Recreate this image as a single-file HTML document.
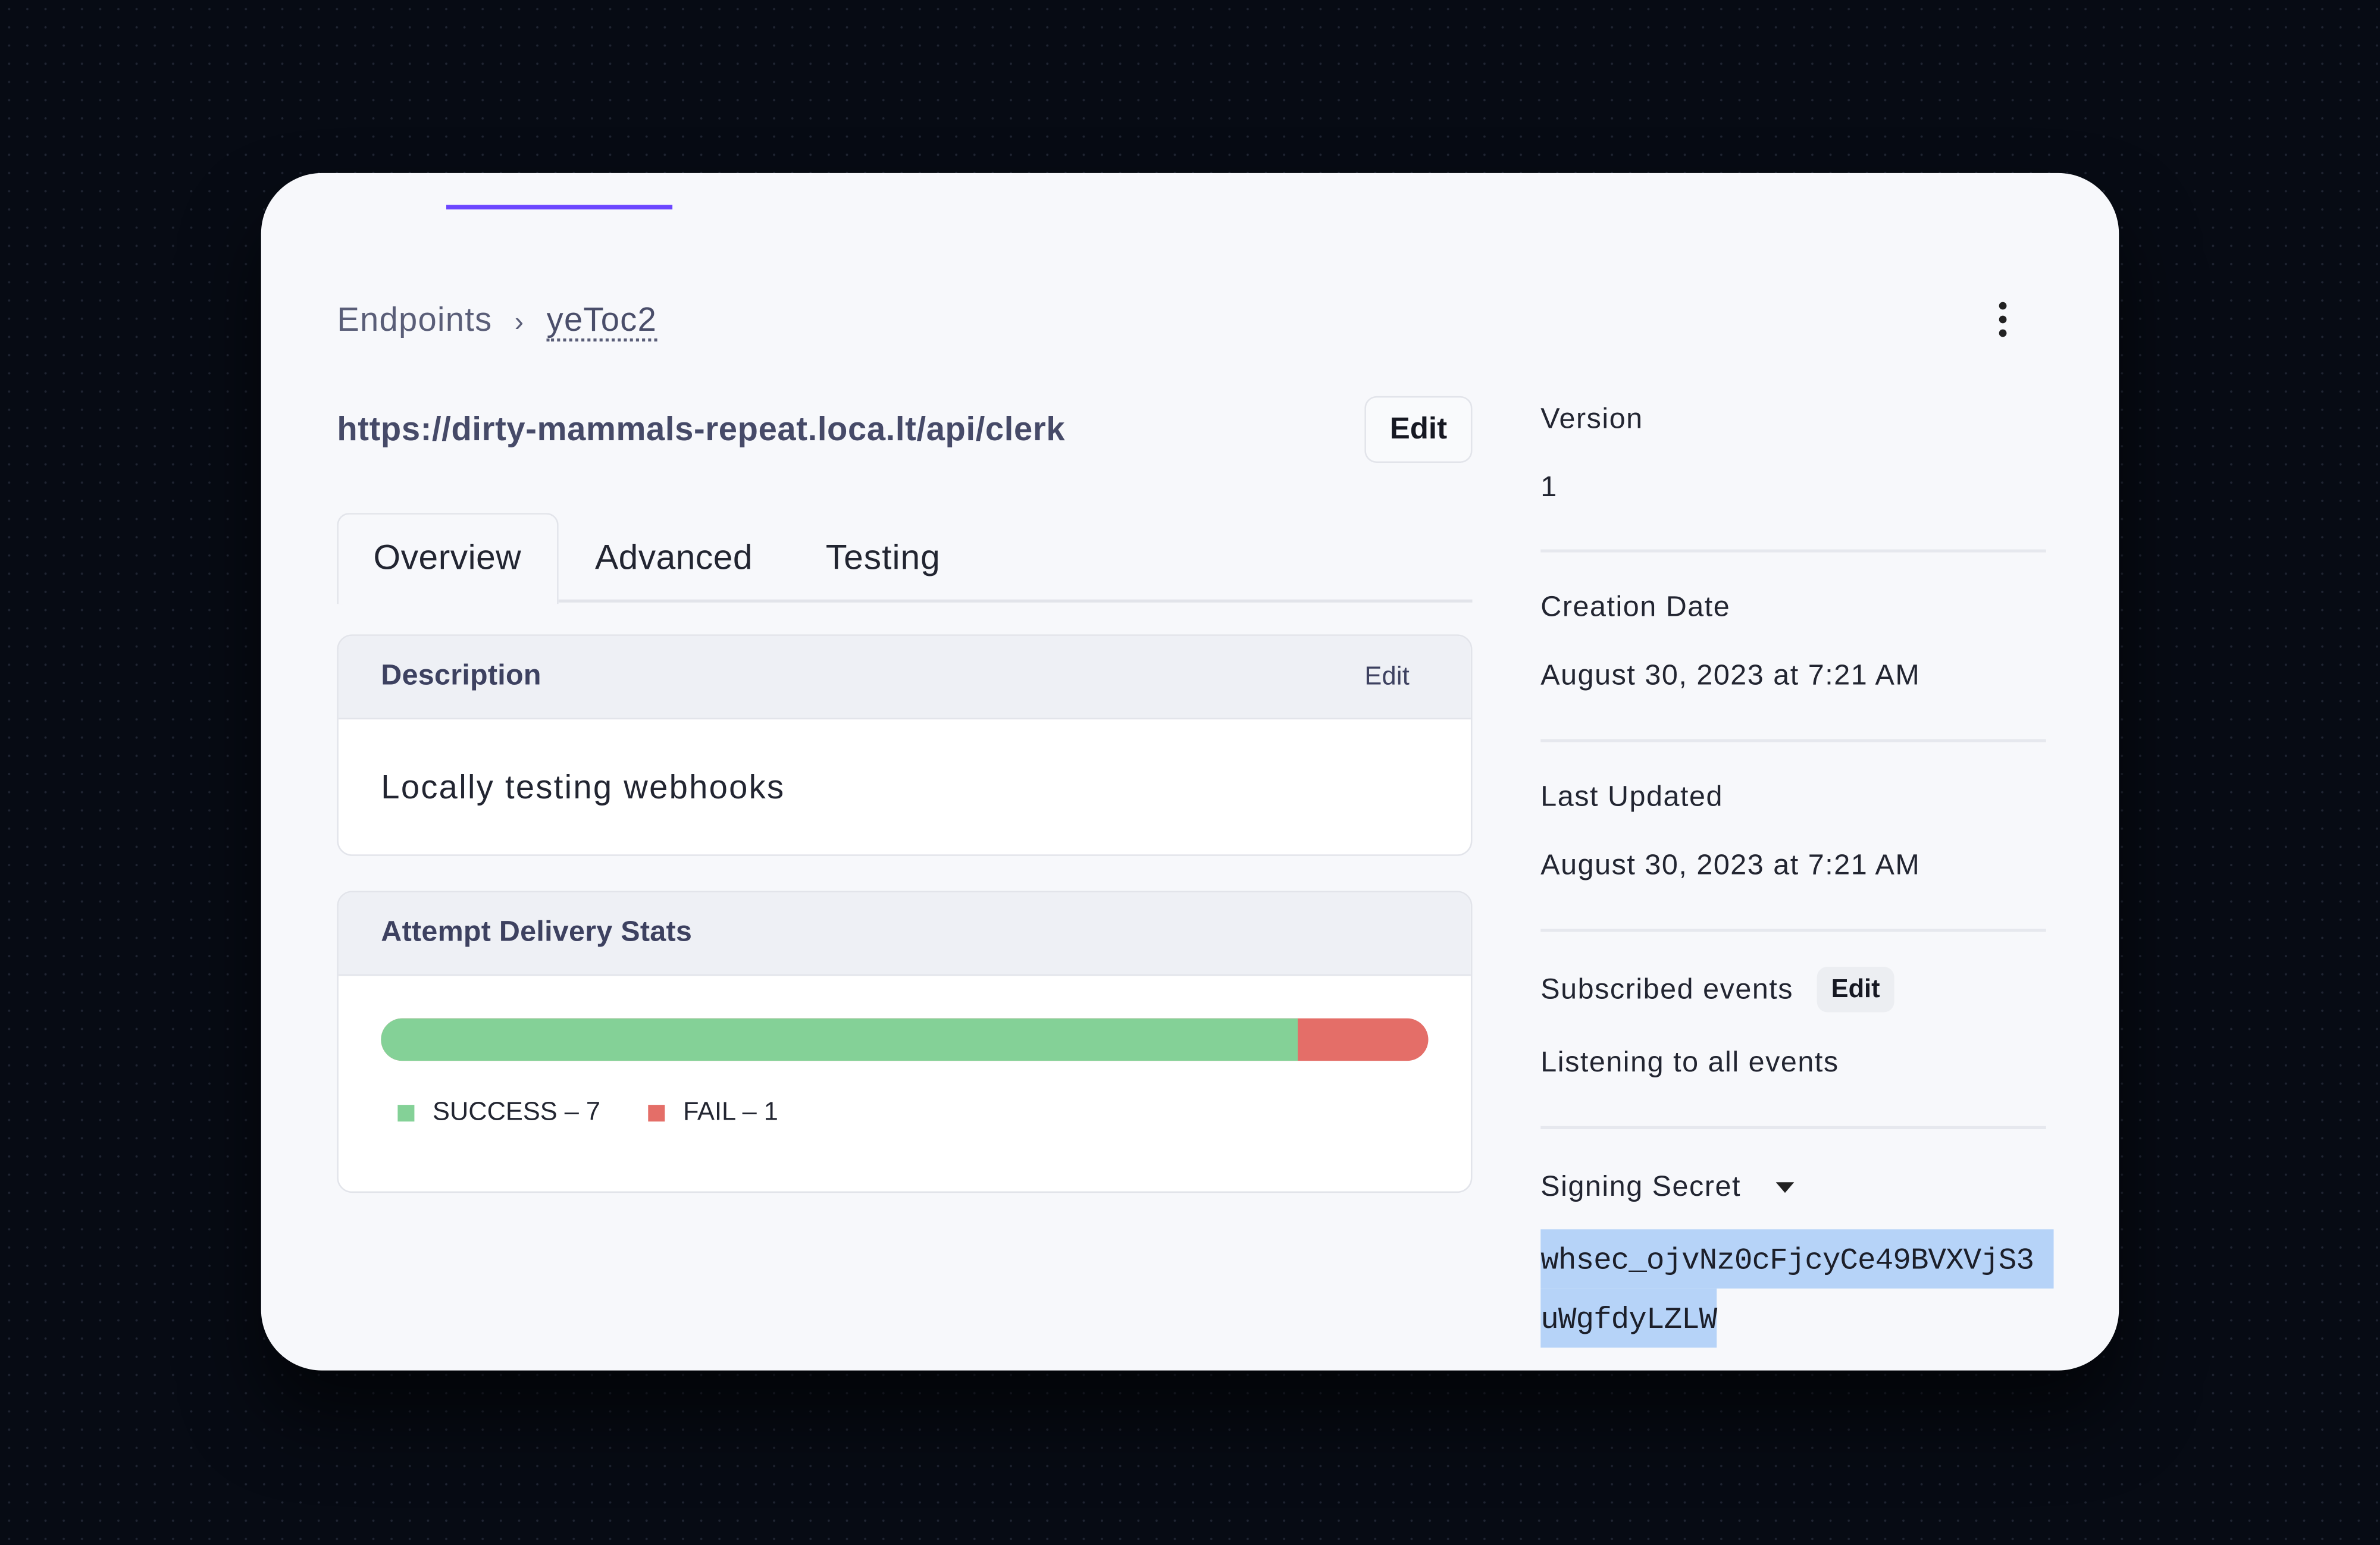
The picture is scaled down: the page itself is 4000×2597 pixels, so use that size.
<!DOCTYPE html>
<html><head><meta charset="utf-8"><style>
*{margin:0;padding:0;box-sizing:border-box}
html,body{width:4000px;height:2596px;overflow:hidden;background:#070b14}
#w{position:absolute;left:0;top:0;width:1568px;height:1018px;transform:scale(2.55102);transform-origin:0 0;font-family:"Liberation Sans",sans-serif;
background-color:#070b14;background-image:radial-gradient(circle,rgba(120,130,160,.22) 0.6px,transparent 0.9px);background-size:12px 12px}
.a{position:absolute;white-space:nowrap}
#card{position:absolute;left:172px;top:114px;width:1224px;height:789px;background:#f7f8fb;border-radius:40px;box-shadow:0 30px 80px rgba(0,0,0,.6);overflow:hidden}
.box{position:absolute;left:50px;width:748px;background:#fff;border:1.5px solid #e2e4ea;border-radius:10px;overflow:hidden}
.hd{height:55px;background:#eef0f5;border-bottom:1.5px solid #e2e4ea;position:relative}
.hd span{position:absolute;left:28px;top:16px;font-size:19px;color:#3d4160;font-weight:bold;letter-spacing:.1px}
.lbl{font-size:19px;color:#222531;letter-spacing:.6px}
.div{position:absolute;left:843px;width:333px;height:1.5px;background:#e6e8ee}
</style></head><body><div id="w">
<div id="card">
 <div class="a" style="left:122px;top:21px;width:149px;height:3px;background:#6c47ff"></div>
 <div class="a" style="left:50px;top:84px;font-size:22px;color:#5a5e78;letter-spacing:.5px">Endpoints <span style="margin:0 8px;font-size:18px">›</span> <span style="border-bottom:2px dotted #5a5e78;color:#4a4e6a">yeToc2</span></div>
 <div class="a" style="left:1145px;top:85px;width:6px">
  <div style="width:5px;height:5px;border-radius:50%;background:#222;margin-bottom:4px"></div>
  <div style="width:5px;height:5px;border-radius:50%;background:#222;margin-bottom:4px"></div>
  <div style="width:5px;height:5px;border-radius:50%;background:#222"></div></div>
 <div class="a" style="left:50px;top:156px;font-size:22px;color:#464a68;font-weight:bold;letter-spacing:.25px">https://dirty-mammals-repeat.loca.lt/api/clerk</div>
 <div class="a" style="left:727px;top:147px;width:71px;height:44px;border:1.5px solid #e2e4ea;border-radius:8px;background:#f9fafc;font-size:20px;font-weight:bold;color:#161822;text-align:center;line-height:42px">Edit</div>
 <div class="a" style="left:50px;top:224px;width:146px;height:60px;border:1.5px solid #e2e4ea;border-bottom:none;border-radius:8px 8px 0 0;background:#f7f8fb"></div>
 <div class="a" style="left:196px;top:281px;width:602px;height:1.5px;background:#e2e4ea"></div>
 <div class="a" style="left:74px;top:240px;font-size:23px;color:#222531;letter-spacing:.2px">Overview</div>
 <div class="a" style="left:220px;top:240px;font-size:23px;color:#222531;letter-spacing:.2px">Advanced</div>
 <div class="a" style="left:372px;top:240px;font-size:23px;color:#222531;letter-spacing:.4px">Testing</div>
 <div class="box" style="top:304px;height:146px">
  <div class="hd"><span>Description</span><span style="left:676px;top:17px;font-size:17px;font-weight:normal">Edit</span></div>
  <div class="a" style="left:28px;top:87px;font-size:22px;color:#222531;letter-spacing:.9px">Locally testing webhooks</div>
 </div>
 <div class="box" style="top:473px;height:199px">
  <div class="hd"><span>Attempt Delivery Stats</span></div>
  <div class="a" style="left:28px;top:83px;width:690px;height:28px;border-radius:14px;overflow:hidden;background:#e46e68"><div style="width:604px;height:28px;background:#84d197"></div></div>
  <div class="a" style="left:39px;top:140px;width:11px;height:11px;background:#84d197"></div>
  <div class="a" style="left:62px;top:135px;font-size:17px;color:#222531">SUCCESS – 7</div>
  <div class="a" style="left:204px;top:140px;width:11px;height:11px;background:#e46e68"></div>
  <div class="a" style="left:227px;top:135px;font-size:17px;color:#222531">FAIL – 1</div>
 </div>
 <div class="a lbl" style="left:843px;top:152px">Version</div>
 <div class="a lbl" style="left:843px;top:197px">1</div>
 <div class="div" style="top:248px"></div>
 <div class="a lbl" style="left:843px;top:276px">Creation Date</div>
 <div class="a lbl" style="left:843px;top:321px">August 30, 2023 at 7:21 AM</div>
 <div class="div" style="top:373px"></div>
 <div class="a lbl" style="left:843px;top:401px">Last Updated</div>
 <div class="a lbl" style="left:843px;top:446px">August 30, 2023 at 7:21 AM</div>
 <div class="div" style="top:498px"></div>
 <div class="a lbl" style="left:843px;top:528px">Subscribed events</div>
 <div class="a" style="left:1025px;top:523px;width:51px;height:30px;background:#eceef2;border-radius:7px;font-size:17px;font-weight:bold;color:#161822;text-align:center;line-height:30px">Edit</div>
 <div class="a lbl" style="left:843px;top:576px">Listening to all events</div>
 <div class="div" style="top:628px"></div>
 <div class="a lbl" style="left:843px;top:658px">Signing Secret</div>
 <div class="a" style="left:998px;top:665px;width:0;height:0;border-left:6px solid transparent;border-right:6px solid transparent;border-top:7px solid #222"></div>
 <div class="a" style="left:843px;top:696px;width:338px;height:39px;background:#b6d3f8"></div>
 <div class="a" style="left:843px;top:735px;width:116px;height:39px;background:#b6d3f8"></div>
 <div class="a" style="left:843px;top:698px;font-family:'Liberation Mono',monospace;font-size:20px;color:#1c1f2a;line-height:39px;letter-spacing:-.4px">whsec_ojvNz0cFjcyCe49BVXVjS3<br>uWgfdyLZLW</div>
</div>
</div></body></html>
